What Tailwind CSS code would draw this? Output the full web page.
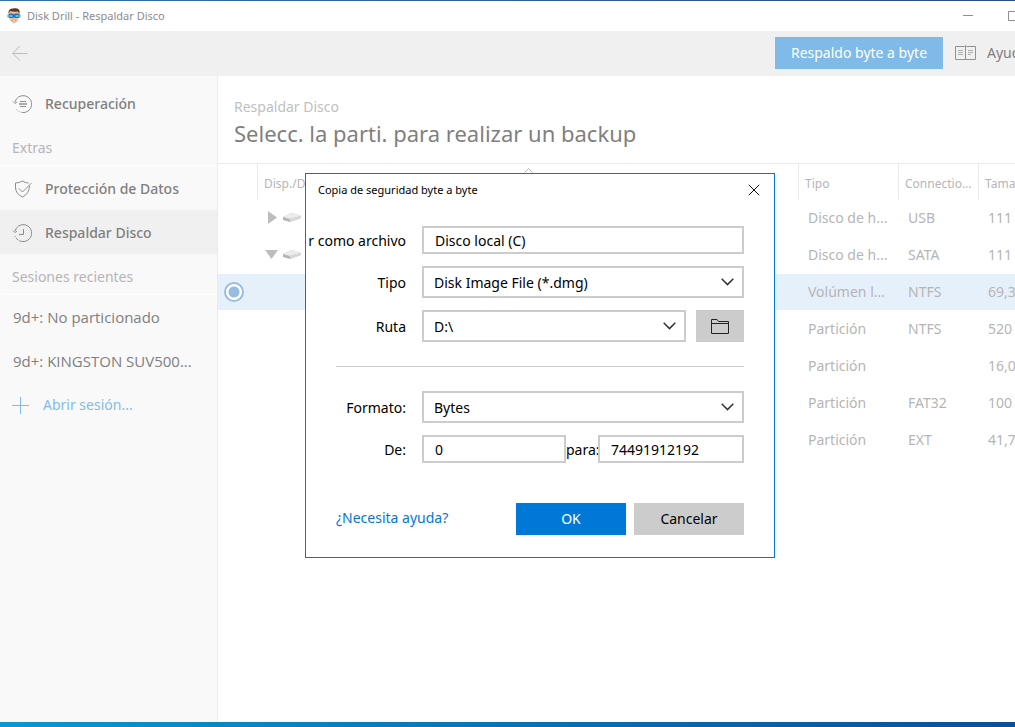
<!DOCTYPE html>
<html lang="es">
<head>
<meta charset="utf-8">
<title>Disk Drill - Respaldar Disco</title>
<script src="https://cdn.jsdelivr.net/npm/@tailwindcss/browser@4"></script>
</head>
<body class="relative flex h-screen flex-col overflow-hidden bg-white font-['Noto_Sans','Open_Sans',sans-serif] text-sm text-[#7f7f7f]">
  <div class="h-px shrink-0 bg-linear-to-r from-[#2f74a5] to-[#2c4a86]"></div>
  <header class="flex h-[30px] shrink-0 items-center overflow-hidden pl-[7px] text-[11px] text-[#8c8c8c]">
    <svg class="mr-[6px] h-4 w-[14px] shrink-0" viewBox="1 0 14 16" aria-hidden="true">
      <path d="M3 5Q2 1 6 1Q11-1 13 2Q14 4 13 9L11.500 13 8 15.500 4.500 13 3 9Z" fill="#edbc9c"/>
      <path d="M2.500 6Q2 .5 7 .5Q12-.5 13.500 2.500V6L12 3.500Q8 4 4 3Z" fill="#5c3522"/>
      <path d="M1.500 6.500h1v3h-1zM13.500 6.500h1v3h-1z" fill="#69a562"/>
      <rect x="2.500" y="5.500" width="5.500" height="4.500" rx="1.500" fill="#1b70b8"/><rect x="8" y="5.500" width="5.500" height="4.500" rx="1.500" fill="#1b70b8"/>
      <path d="M3.500 7h3v2h-3zM9.500 7h3v2h-3z" fill="#58c5f4"/>
      <path d="M5.500 12.500Q8 11 10.500 12.500L9.500 14h-3Z" fill="#c08f70"/><path d="M6.500 12.500h3v1h-3z" fill="#fff"/>
    </svg>
    <h1 class="whitespace-nowrap">Disk Drill - Respaldar Disco</h1>
    <div class="ml-auto flex shrink-0 items-center gap-[35px]">
      <button type="button" aria-label="Minimizar"><svg class="block h-[11px] w-[10px]" viewBox="0 0 10 11" stroke="#8f8f8f"><path d="M0 4.500h10"/></svg></button>
      <button type="button" aria-label="Maximizar" class="w-[7px] overflow-hidden"><svg class="block h-[11px] w-[11px]" viewBox="0 0 11 11" fill="none" stroke="#8f8f8f"><path d="M.5.5h10v9H.5z"/></svg></button>
    </div>
  </header>
  <nav class="flex h-[45px] shrink-0 items-center justify-between overflow-hidden bg-[#f0f0f0] pb-[2px] pl-3">
    <button type="button" aria-label="Atrás"><svg class="block size-4" viewBox="0 0 16 16" fill="none" stroke="#bdbdbd"><path d="M.7 8.500H15.500M8 .8L.7 8.500 8 15.500"/></svg></button>
    <div class="flex items-center">
      <button type="button" class="h-8 w-[168px] bg-[#80bae8] text-sm whitespace-nowrap text-white">Respaldo byte a byte</button>
      <a href="#" class="flex w-[72px] items-center gap-[11px] overflow-hidden pl-3">
        <svg class="h-4 w-[21px] shrink-0" viewBox="0 0 21 16" fill="none" stroke="#929292"><path d="M.5 1.500H9.500L10.500.5 11.500 1.500H20.500V14.500H.5ZM10.500 1V15"/><path stroke="#b0b0b0" d="M3 5.500h5M3 7.500h5M3 9.500h5M13 5.500h5M13 7.500h5M13 9.500h3"/></svg>
        <span>Ayuda</span>
      </a>
    </div>
  </nav>

  <div class="flex min-h-0 flex-1">
    <aside class="w-[218px] shrink-0 border-r border-[#ebebeb] bg-[#f9f9f9] pt-[6px]">
      <a href="#" class="flex h-11 items-center gap-[13px] pl-3 font-medium">
        <svg class="size-5" viewBox="0 0 20 20" fill="none" stroke="#8e8e8e"><path d="M3 8A8.500 8.500 0 1 1 10 18.500"/><path stroke="#cfcfcf" d="M10 18.500A8.500 8.500 0 0 1 4 15"/><path d="M1 7.500l2 2 2-1.500M8 7.500h6M8 12.500h6"/><path stroke="#aaa" stroke-width="2" d="M7 10h8"/></svg>
        Recuperación
      </a>
      <h2 class="mx-[2px] flex h-10 items-center border-b border-white pt-1 pl-[10px] text-[#b5b5b5]">Extras</h2>
      <a href="#" class="flex h-11 items-center gap-[13px] pt-[2px] pl-3 font-medium">
        <svg class="size-5" viewBox="0 0 20 20" fill="none" stroke="#8e8e8e"><path d="M16.500 4Q13 4 10.500 2Q7 4 3.500 4V9Q4 15 10.500 18Q17 15 17.500 7M7 9.500l3.500 3.500L19.500 4"/></svg>
        Protección de Datos
      </a>
      <a href="#" aria-current="page" class="flex h-11 items-center gap-[13px] bg-[#f0f0f0] pt-[2px] pl-3 font-medium">
        <svg class="size-5" viewBox="0 0 20 20" fill="none" stroke="#8e8e8e"><path d="M3 8A8.500 8.500 0 1 1 10 18.500"/><path stroke-dasharray="3 1" d="M10 18.500A8.500 8.500 0 0 1 3 13"/><path d="M1 7.500l2 2 2-1.500M11.500 6V11.500H7"/></svg>
        Respaldar Disco
      </a>
      <h2 class="mx-[2px] flex h-[41px] items-center border-b border-white pt-[6px] pl-[10px] text-[#b5b5b5]">Sesiones recientes</h2>
      <a href="#" class="flex h-11 items-center pt-[2px] pl-[13px] font-['Open_Sans',sans-serif] text-[15px] font-medium">9d+: No particionado</a>
      <a href="#" class="flex h-11 items-center pt-[2px] pl-[13px] font-['Open_Sans',sans-serif] text-[15px] font-medium">9d+: KINGSTON SUV500...</a>
      <a href="#" class="flex h-11 items-center gap-[14px] pl-3 text-[#85bbe6]">
        <svg class="size-[17px]" viewBox="0 0 17 17" stroke="#7fbce8"><path d="M0 8.500h17M8.500 0v17"/></svg>
        Abrir sesión...
      </a>
    </aside>

    <main class="min-w-0 flex-1 overflow-hidden">
      <div class="h-[88px] border-b border-[#ebebeb] pt-5 pl-4">
        <p class="h-[22px] leading-[22px] text-[#c0c0c0]">Respaldar Disco</p>
        <h2 class="text-[22px] leading-[30px] whitespace-nowrap">Selecc. la parti. para realizar un backup</h2>
      </div>
      <table class="w-full table-fixed border-separate border-spacing-0 text-left whitespace-nowrap text-[#b5b5b5]">
        <colgroup><col class="w-10"><col><col class="w-[100px]"><col class="w-20"><col class="w-[36px]"></colgroup>
        <thead>
          <tr class="h-9 text-xs">
            <th class="border-r border-[#ebebeb]"></th>
            <th class="relative border-r border-[#ebebeb] pt-1 pl-[6px] font-normal">Disp./D<svg class="absolute top-1 left-1/2 h-[5px] w-[9px] -translate-x-1" viewBox="0 0 9 5" fill="none" stroke="#b5b5b5"><path d="M.5 4.500l4-4 4 4"/></svg></th>
            <th class="border-r border-[#ebebeb] pt-1 pl-[6px] font-normal">Tipo</th>
            <th class="border-r border-[#ebebeb] pt-1 pl-[6px] font-normal">Connectio...</th>
            <th class="overflow-hidden pt-1 pl-[6px] font-normal">Tama</th>
          </tr>
        </thead>
        <tbody>
          <tr class="h-[37px]">
            <td></td>
            <td class="pb-[3px] pl-[10px]"><div class="flex items-center gap-[6px]"><svg class="h-[13px] w-[9px]" viewBox="0 0 9 13" fill="#bdbdbd"><path d="M0 0l9 6.500L0 13z"/></svg><svg class="h-[10px] w-[18px]" viewBox="0 0 18 10"><path d="M0 5L9 1l9 3v2L7 10 0 8z" fill="#b5b5b5"/><path d="M0 5L9 1l9 3L7 7z" fill="#ececec"/><path d="M7 7l11-3v2L7 10z" fill="#d9d9d9"/></svg></div></td>
            <td class="pb-[2px] pl-[9px]">Disco de h...</td><td class="pb-[2px] pl-[9px]">USB</td><td class="overflow-hidden pb-[2px] pl-[9px]">111</td>
          </tr>
          <tr class="h-[37px]">
            <td></td>
            <td class="pb-[3px] pl-[7px]"><div class="flex items-center gap-[5px]"><svg class="h-[9px] w-[13px]" viewBox="0 0 13 9" fill="#bdbdbd"><path d="M0 0h13L6.500 9z"/></svg><svg class="h-[10px] w-[18px]" viewBox="0 0 18 10"><path d="M0 5L9 1l9 3v2L7 10 0 8z" fill="#b5b5b5"/><path d="M0 5L9 1l9 3L7 7z" fill="#ececec"/><path d="M7 7l11-3v2L7 10z" fill="#d9d9d9"/></svg></div></td>
            <td class="pb-[2px] pl-[9px]">Disco de h...</td><td class="pb-[2px] pl-[9px]">SATA</td><td class="overflow-hidden pb-[2px] pl-[9px]">111</td>
          </tr>
          <tr class="h-[37px] bg-[#e6f0fb]">
            <td class="border-b border-white pl-[6px]"><input type="radio" name="disco" checked aria-label="Volúmen lógico" class="block size-5 appearance-none rounded-full border-2 border-[#99bbe0] bg-[radial-gradient(circle,#99bbe0_5px,#fff_6px)]"></td>
            <td class="border-b border-white"></td><td class="border-b border-white pl-[9px]">Volúmen l...</td><td class="border-b border-white pl-[9px]">NTFS</td><td class="overflow-hidden border-b border-white pl-[9px]">69,3</td>
          </tr>
          <tr class="h-[37px]"><td></td><td></td><td class="pb-[2px] pl-[9px]">Partición</td><td class="pb-[2px] pl-[9px]">NTFS</td><td class="overflow-hidden pb-[2px] pl-[9px]">520</td></tr>
          <tr class="h-[37px]"><td></td><td></td><td class="pb-[2px] pl-[9px]">Partición</td><td></td><td class="overflow-hidden pb-[2px] pl-[9px]">16,0</td></tr>
          <tr class="h-[37px]"><td></td><td></td><td class="pb-[2px] pl-[9px]">Partición</td><td class="pb-[2px] pl-[9px]">FAT32</td><td class="overflow-hidden pb-[2px] pl-[9px]">100</td></tr>
          <tr class="h-[37px]"><td></td><td></td><td class="pb-[2px] pl-[9px]">Partición</td><td class="pb-[2px] pl-[9px]">EXT</td><td class="overflow-hidden pb-[2px] pl-[9px]">41,7</td></tr>
        </tbody>
      </table>
    </main>
  </div>
  <div class="h-[5px] shrink-0 bg-linear-to-r from-[#0a97d3] to-[#0a4f9c]"></div>

  <section role="dialog" aria-labelledby="dialog-title" class="absolute top-[173px] left-[305px] w-[470px] overflow-hidden border border-[#0078d7] bg-white text-black">
    <div class="flex h-[34px] items-center justify-between pr-[14px] pb-[2px] pl-3">
      <h2 id="dialog-title" class="text-[11px]">Copia de seguridad byte a byte</h2>
      <button type="button" aria-label="Cerrar"><svg class="block size-3" viewBox="0 0 12 12" fill="none" stroke="#111"><path d="M.8.8l10.400 10.400M11.200.8L.8 11.200"/></svg></button>
    </div>
    <form class="pt-[18px] pr-[30px] pb-[22px]">
      <div class="grid grid-cols-[100px_minmax(0,1fr)] items-center gap-x-4 gap-y-3">
        <label for="archivo" class="flex justify-end pt-px whitespace-nowrap">r como archivo</label>
        <input id="archivo" value="Disco local (C)" class="h-7 min-w-0 border-2 border-[#ccc] px-[11px]">
        <label for="tipo" class="pt-px text-right">Tipo</label>
        <div class="relative">
          <select id="tipo" class="block h-8 w-full appearance-none border-2 border-[#ccc] bg-white px-[10px] pt-px"><option>Disk Image File (*.dmg)</option></select>
          <svg class="pointer-events-none absolute top-3 right-[10px] h-2 w-[13px]" viewBox="0 0 13 8" fill="none" stroke="#333" stroke-width="1.500"><path d="M.7.8L6.500 6.600 12.300.8"/></svg>
        </div>
        <label for="ruta" class="pt-px text-right">Ruta</label>
        <div class="flex gap-[10px]">
          <div class="relative flex-1">
            <select id="ruta" class="block h-8 w-full appearance-none border-2 border-[#ccc] bg-white px-[10px] pt-px"><option>D:\</option></select>
            <svg class="pointer-events-none absolute top-3 right-[10px] h-2 w-[13px]" viewBox="0 0 13 8" fill="none" stroke="#333" stroke-width="1.500"><path d="M.7.8L6.500 6.600 12.300.8"/></svg>
          </div>
          <button type="button" aria-label="Examinar" class="flex h-8 w-12 items-center justify-center bg-[#ccc]"><svg class="h-[15px] w-[18px]" viewBox="0 0 18 15" fill="none" stroke="#222"><path d="M.5.5H6L7.500 2.500H17.500V14.500H.5ZM.5 4.500H17.500"/></svg></button>
        </div>
      </div>
      <hr class="my-6 ml-[30px] border-[#ccc]">
      <div class="grid grid-cols-[100px_minmax(0,1fr)] items-center gap-x-4 gap-y-3">
        <label for="formato" class="pt-px text-right">Formato:</label>
        <div class="relative">
          <select id="formato" class="block h-8 w-full appearance-none border-2 border-[#ccc] bg-white px-[10px] pt-px"><option>Bytes</option></select>
          <svg class="pointer-events-none absolute top-3 right-[10px] h-2 w-[13px]" viewBox="0 0 13 8" fill="none" stroke="#333" stroke-width="1.500"><path d="M.7.8L6.500 6.600 12.300.8"/></svg>
        </div>
        <label for="de" class="pt-px text-right">De:</label>
        <div class="flex items-center">
          <input id="de" value="0" class="h-7 w-36 border-2 border-[#ccc] px-[11px]">
          <label for="para" class="w-8 pt-px text-center whitespace-nowrap">para:</label>
          <input id="para" value="74491912192" class="h-7 min-w-0 flex-1 border-2 border-[#ccc] px-[11px]">
        </div>
      </div>
      <div class="mt-10 flex items-center gap-2 pl-[30px]">
        <a href="#" class="mr-auto pb-[2px] text-[#0078d7]">¿Necesita ayuda?</a>
        <button type="submit" class="h-8 w-[110px] bg-[#0078d7] text-white">OK</button>
        <button type="button" class="h-8 w-[110px] bg-[#ccc]">Cancelar</button>
      </div>
    </form>
  </section>
</body>
</html>
